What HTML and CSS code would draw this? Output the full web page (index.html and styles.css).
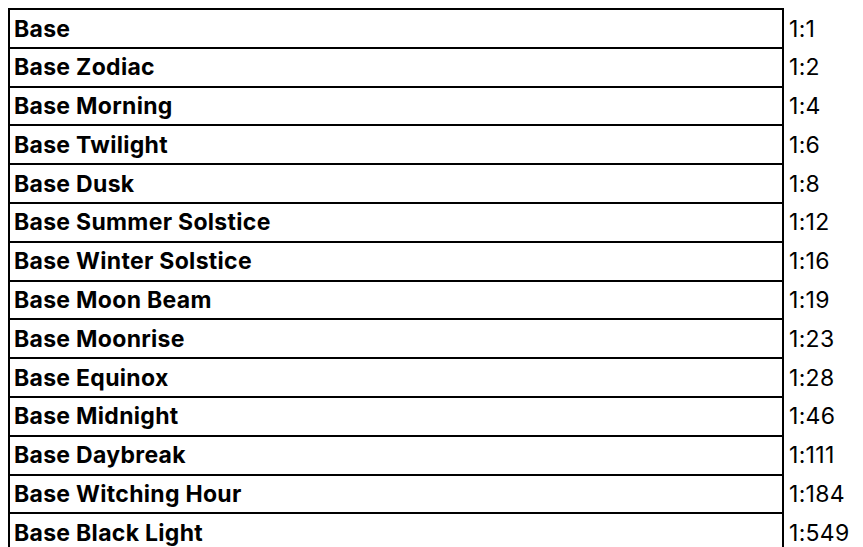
FILE: index.html
```html
<!DOCTYPE html>
<html lang="en">
<head>
<meta charset="utf-8">
<title>Base ratios</title>
<link rel="stylesheet" href="styles.css">
</head>
<body>
<div class="sheet">
  <div class="name first">Base</div><div class="ratio">1:1</div>
  <div class="name">Base Zodiac</div><div class="ratio">1:2</div>
  <div class="name">Base Morning</div><div class="ratio">1:4</div>
  <div class="name">Base Twilight</div><div class="ratio">1:6</div>
  <div class="name">Base Dusk</div><div class="ratio">1:8</div>
  <div class="name">Base Summer Solstice</div><div class="ratio">1:12</div>
  <div class="name">Base Winter Solstice</div><div class="ratio">1:16</div>
  <div class="name">Base Moon Beam</div><div class="ratio">1:19</div>
  <div class="name">Base Moonrise</div><div class="ratio">1:23</div>
  <div class="name">Base Equinox</div><div class="ratio">1:28</div>
  <div class="name">Base Midnight</div><div class="ratio">1:46</div>
  <div class="name">Base Daybreak</div><div class="ratio">1:111</div>
  <div class="name">Base Witching Hour</div><div class="ratio">1:184</div>
  <div class="name">Base Black Light</div><div class="ratio">1:549</div>
</div>
</body>
</html>
```
FILE: styles.css
```css
html, body {
  overflow: hidden;
}
body {
  margin: 8px;
  background: #fff;
  color: #000;
  font-family: "Inter", "Roboto", sans-serif;
  font-size: 23px;
  letter-spacing: 0.3px;
}
.sheet {
  display: grid;
  grid-template-columns: 776px auto;
}
.name, .ratio {
  display: flex;
  align-items: flex-end;
  box-sizing: border-box;
  height: 38.8px;
  white-space: nowrap;
}
.name {
  font-weight: 700;
  border: 2px solid #000;
  border-top: 0;
  padding-left: 4px;
  padding-bottom: 4.3px;
}
.name.first {
  border-top: 2px solid #000;
  height: 40.8px;
}
.ratio {
  font-weight: 400;
  padding-left: 5px;
  padding-bottom: 6.3px;
}
.ratio:nth-child(2) {
  height: 40.8px;
}
```
